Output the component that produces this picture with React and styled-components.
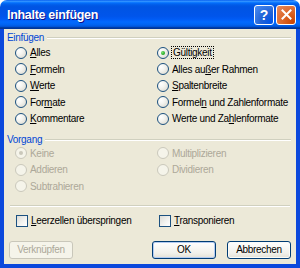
import React from "react";
import styled, { createGlobalStyle, css } from "styled-components";

const GlobalStyle = createGlobalStyle`
  html, body { margin: 0; padding: 0; background: #ffffff; }
  body { font-family: "Liberation Sans", Arial, sans-serif; }
`;

const Window = styled.div`
  width: 300px;
  height: 268px;
  display: flex;
  flex-direction: column;
  overflow: hidden;
`;

const TitleBar = styled.div`
  height: 29px;
  flex: none;
  display: flex;
  align-items: center;
  padding: 0 4px 0 7px;
  box-sizing: border-box;
  border-radius: 7px 7px 0 0;
  background: linear-gradient(
    180deg,
    #0058ee 0%,
    #3593ff 4%,
    #288eff 6%,
    #127dff 8%,
    #036ffc 10%,
    #0262ee 14%,
    #0057e5 20%,
    #0054e3 24%,
    #0055eb 56%,
    #005bf5 66%,
    #026afe 76%,
    #0062ef 86%,
    #0052d6 92%,
    #0040ab 94%,
    #003092 100%
  );
`;

const Title = styled.div`
  flex: 1;
  color: #ffffff;
  font-weight: bold;
  font-size: 12.5px;
  letter-spacing: -0.3px;
  text-shadow: 1px 1px #0f1089;
  padding-top: 1px;
`;

const CaptionButtons = styled.div`
  display: flex;
  gap: 2px;
`;

const CaptionButton = styled.div`
  width: 20px;
  height: 20px;
  box-sizing: border-box;
  border: 1px solid #ffffff;
  border-radius: 3px;
  display: flex;
  align-items: center;
  justify-content: center;
  color: #ffffff;
  font-weight: bold;
  font-size: 14px;
  ${(p) =>
    p.$variant === "close"
      ? css`
          background: radial-gradient(circle at 90% 90%, #cc4600 0%, #dc6527 45%, #e58a5e 100%);
        `
      : css`
          background: radial-gradient(circle at 90% 90%, #0054e9 0%, #2263d5 45%, #4d8ff5 100%);
        `}
`;

const Body = styled.div`
  flex: 1;
  background: #ece9d8;
  border: 4px solid #0b48dc;
  border-top: 0;
  box-sizing: border-box;
  display: flex;
  flex-direction: column;
  padding: 2px 5px 0 3px;
  font-size: 10px;
  letter-spacing: -0.3px;
  color: #000000;
`;

const SectionHeader = styled.div`
  display: flex;
  align-items: center;
  gap: 3px;
  height: 12px;
  color: #0046d5;
  margin-top: ${(p) => p.$top || 0}px;
  &::after {
    content: "";
    flex: 1;
    height: 1px;
    background: #d0d0bf;
    box-shadow: 0 1px #ffffff;
    margin-top: 1px;
  }
`;

const OptionGrid = styled.div`
  display: grid;
  grid-template-columns: 142px 1fr;
  grid-template-rows: repeat(${(p) => p.$rows}, 16.5px);
  grid-auto-flow: column;
  padding-left: 8px;
  margin-top: ${(p) => p.$top || 0}px;
`;

const Option = styled.label`
  display: flex;
  align-items: center;
  gap: 3px;
  color: ${(p) => (p.$disabled ? "#aca899" : "#000000")};
  white-space: nowrap;
`;

const Radio = styled.span`
  width: 12px;
  height: 12px;
  box-sizing: border-box;
  border-radius: 50%;
  flex: none;
  display: flex;
  align-items: center;
  justify-content: center;
  border: 1px solid ${(p) => (p.$disabled ? "#cac8bb" : "#1c5180")};
  background: ${(p) =>
    p.$disabled
      ? "#f5f4ea"
      : "radial-gradient(circle at 30% 30%, #ffffff 0%, #f3f3ef 40%, #d6d4c9 100%)"};
  &::after {
    content: "";
    display: ${(p) => (p.$checked ? "block" : "none")};
    width: 4px;
    height: 4px;
    border-radius: 50%;
    background: ${(p) =>
      p.$disabled ? "#cac8bb" : "radial-gradient(circle at 35% 35%, #76e46d 0%, #21a121 70%, #1b8a1b 100%)"};
  }
`;

const Focus = styled.span`
  outline: 1px dotted #000000;
  outline-offset: 0;
  padding: 0 1px;
`;

const Key = styled.span`
  text-decoration: underline;
`;

const Separator = styled.div`
  height: 1px;
  background: #d0d0bf;
  box-shadow: 0 1px #ffffff;
  margin: 10px 1px 0 3px;
`;

const CheckGrid = styled.div`
  display: grid;
  grid-template-columns: 143px 1fr;
  height: 16px;
  padding-left: 9px;
  margin-top: 7px;
`;

const Checkbox = styled.span`
  width: 12px;
  height: 12px;
  box-sizing: border-box;
  flex: none;
  border: 1px solid #1c5180;
  background: linear-gradient(135deg, #dcdcd7 0%, #f4f4f1 60%, #ffffff 100%);
`;

const ButtonRow = styled.div`
  display: flex;
  align-items: center;
  gap: 11px;
  padding-left: 2px;
  margin-top: 12px;
`;

const Spacer = styled.div`
  flex: 1;
`;

const Button = styled.div`
  width: 64px;
  height: 18px;
  box-sizing: border-box;
  border-radius: 3px;
  display: flex;
  align-items: center;
  justify-content: center;
  font-size: 10px;
  ${(p) =>
    p.$disabled
      ? css`
          border: 1px solid #c9c7ba;
          background: #f5f4ea;
          color: #aca899;
        `
      : css`
          border: 1px solid #003c74;
          color: #000000;
          background: linear-gradient(180deg, #ffffff 0%, #f1f0ea 70%, #e3e0d5 100%);
          box-shadow: inset 0 0 0 1px ${p.$default ? "#b3cbf1" : "#fbfbf8"};
        `}
`;

function CloseGlyph() {
  return (
    <svg width="11" height="11" viewBox="0 0 11 11">
      <path d="M1.5 1.5 L9.5 9.5 M9.5 1.5 L1.5 9.5" stroke="#ffffff" strokeWidth="2" strokeLinecap="square" />
    </svg>
  );
}

export default function App() {
  return (
    <>
      <GlobalStyle />
      <Window>
        <TitleBar>
          <Title>Inhalte einfügen</Title>
          <CaptionButtons>
            <CaptionButton $variant="help">?</CaptionButton>
            <CaptionButton $variant="close">
              <CloseGlyph />
            </CaptionButton>
          </CaptionButtons>
        </TitleBar>
        <Body>
          <SectionHeader>Einfügen</SectionHeader>
          <OptionGrid $rows={5} $top={1.5}>
            <Option><Radio /><span><Key>A</Key>lles</span></Option>
            <Option><Radio /><span><Key>F</Key>ormeln</span></Option>
            <Option><Radio /><span><Key>W</Key>erte</span></Option>
            <Option><Radio /><span>For<Key>m</Key>ate</span></Option>
            <Option><Radio /><span><Key>K</Key>ommentare</span></Option>
            <Option><Radio $checked /><Focus>Gültigkeit</Focus></Option>
            <Option><Radio /><span>Alles au<Key>ß</Key>er Rahmen</span></Option>
            <Option><Radio /><span><Key>S</Key>paltenbreite</span></Option>
            <Option><Radio /><span>Formel<Key>n</Key> und Zahlenformate</span></Option>
            <Option><Radio /><span>Werte und Za<Key>h</Key>lenformate</span></Option>
          </OptionGrid>
          <SectionHeader $top={6}>Vorgang</SectionHeader>
          <OptionGrid $rows={3}>
            <Option $disabled><Radio $disabled $checked />Keine</Option>
            <Option $disabled><Radio $disabled />Addieren</Option>
            <Option $disabled><Radio $disabled />Subtrahieren</Option>
            <Option $disabled><Radio $disabled />Multiplizieren</Option>
            <Option $disabled><Radio $disabled />Dividieren</Option>
          </OptionGrid>
          <Separator />
          <CheckGrid>
            <Option><Checkbox /><span><Key>L</Key>eerzellen überspringen</span></Option>
            <Option><Checkbox /><span><Key>T</Key>ransponieren</span></Option>
          </CheckGrid>
          <ButtonRow>
            <Button $disabled>Verknüpfen</Button>
            <Spacer />
            <Button $default>OK</Button>
            <Button>Abbrechen</Button>
          </ButtonRow>
        </Body>
      </Window>
    </>
  );
}
